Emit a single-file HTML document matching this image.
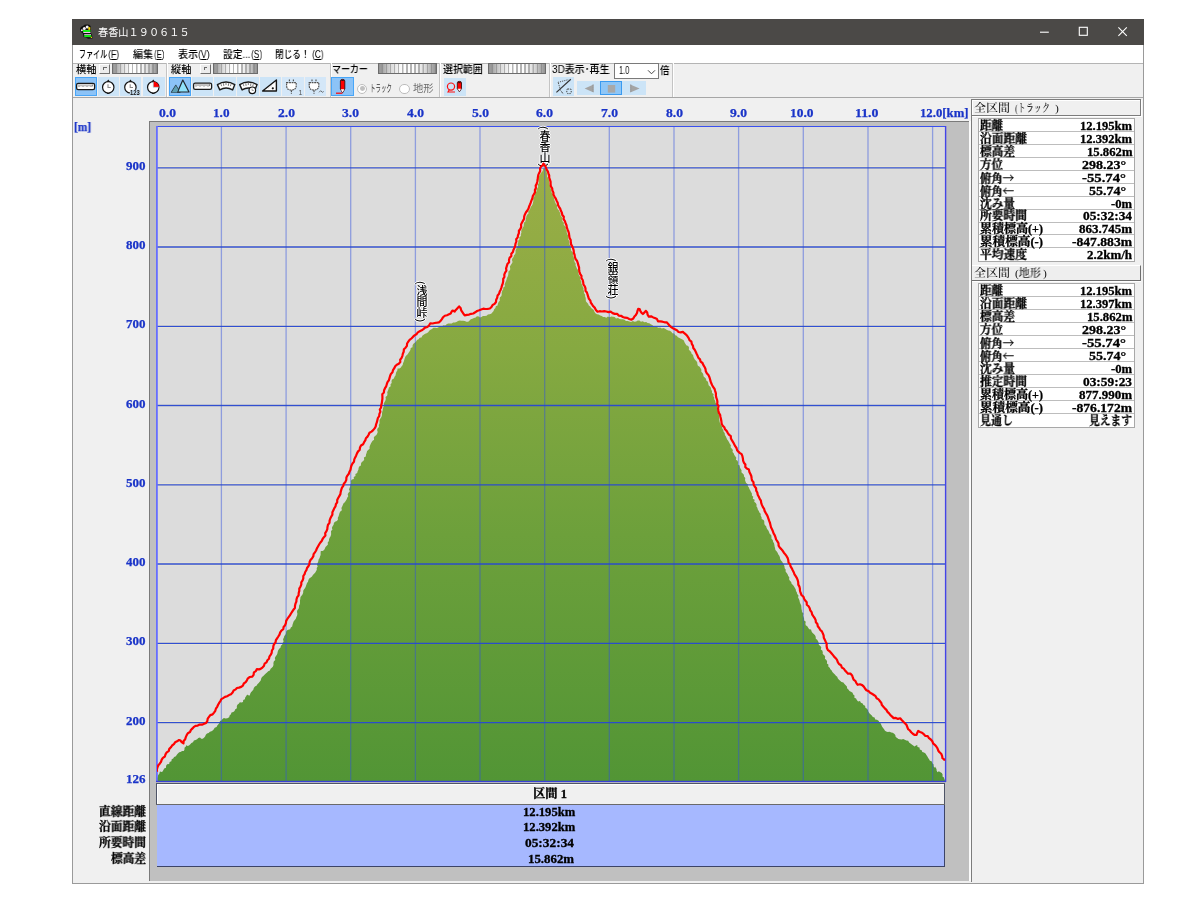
<!DOCTYPE html>
<html lang="ja"><head><meta charset="utf-8"><title>春香山１９０６１５</title>
<style>
html,body{margin:0;padding:0;background:#fff;}
body{width:1200px;height:900px;position:relative;overflow:hidden;font-family:"Liberation Sans","Noto Sans CJK JP",sans-serif;}
.abs{position:absolute;}
span.abs,.vl,#title .t{will-change:transform;}
#win{position:absolute;left:72px;top:19px;width:1071.5px;height:864.5px;background:#f0f0f0;box-shadow:inset 1px -1px 0 #9a9a9a,inset -1px 0 0 #9a9a9a;}
#title{position:absolute;left:0;top:0;width:1071.5px;height:26px;background:#4b4947;}
#title .t{position:absolute;left:26px;top:7px;color:#fff;font-size:10.2px;line-height:14px;letter-spacing:0;white-space:nowrap;}
#menu{position:absolute;left:1px;top:26px;width:1069.5px;height:18px;background:#fff;border-bottom:1px solid #b4b4b4;}
#menu span{position:absolute;top:1px;font-size:10.6px;line-height:15px;color:#000;white-space:nowrap;}
.ser{font-family:"Liberation Serif","Noto Serif CJK SC",serif;font-weight:bold;}
.cj{font-family:"Noto Serif CJK SC",serif;}
.lbl{position:absolute;font-size:10.6px;line-height:13px;color:#000;white-space:nowrap;}
.sld{position:absolute;height:11.4px;top:62.9px;border:1px solid #6c6c6c;background:repeating-linear-gradient(90deg,#fdfdfd 0,#fdfdfd 2.4px,#b4b4b4 2.6px,#b4b4b4 3.9px,#fdfdfd 4.1px);box-sizing:border-box;}
.sld:after{content:"";position:absolute;left:0;top:0;right:0;bottom:0;background:linear-gradient(90deg,rgba(120,120,120,.8),rgba(160,160,160,.35) 22%,rgba(255,255,255,.0) 40%,rgba(255,255,255,0) 62%,rgba(160,160,160,.35) 80%,rgba(120,120,120,.8));}
.sbtn{position:absolute;top:63.6px;width:11.2px;height:10.8px;background:#ececec;border:1px solid #fff;border-right:1.5px solid #707070;border-bottom:1.5px solid #707070;box-sizing:border-box;}
.sbtn:after{content:"";position:absolute;left:3px;top:2.6px;width:2.4px;height:2.2px;border-left:1px solid #6a6a6a;border-top:1px solid #6a6a6a;}
.tb{position:absolute;top:77px;height:19px;background:#cce4f7;box-sizing:border-box;}
.tb.on{background:#8cc3f7;border:1px solid #48a6f8;}
.tb.on2{background:#8fc6f6;border:1.5px solid #3a9af0;}
.tb.dis{background:#d4e7f8;}
.sep{position:absolute;top:63px;width:1px;height:34px;background:#c4c4c4;box-shadow:1px 0 0 #fff;}
.ax{position:absolute;color:#1a34c8;font-size:11.6px;line-height:14px;white-space:nowrap;letter-spacing:0.3px;}
.tbl{position:absolute;left:978px;width:157px;background:#fff;border:1px solid #a8a8a8;box-sizing:border-box;}
.tbl div{position:relative;height:12.95px;box-sizing:border-box;border-bottom:1px solid #bdbdbd;}
.tbl div:last-child{border-bottom:none;}
.tbl b{position:absolute;left:2px;top:0;}
.tbl i{position:absolute;right:2px;top:0;font-style:normal;letter-spacing:0.45px;}
.tbl i.d{right:8px;}
.vl{position:absolute;writing-mode:vertical-rl;font-size:11px;line-height:12px;color:#000;font-weight:500;white-space:nowrap;letter-spacing:0.2px;text-shadow:1px 0 0 #fff,-1px 0 0 #fff,0 1px 0 #fff,0 -1px 0 #fff;font-family:"Liberation Sans","Noto Sans CJK JP",sans-serif;}
.bl{position:absolute;right:1054px;font-size:11.8px;line-height:14px;white-space:nowrap;}
.bv{position:absolute;left:157px;width:788px;text-align:center;font-size:11.8px;line-height:14px;letter-spacing:0.45px;white-space:nowrap;}
</style></head><body>
<div id="win">
 <div id="title"><span class="t">春香山１９０６１５</span></div>
 <div id="menu"></div>
</div>
<span class="abs " style="left:79.4px;top:47.8px;white-space:nowrap;transform-origin:0 0;transform:scaleX(0.676);font-size:10.4px;line-height:14px;color:#000;font-weight:500;">ファイル</span>
<span class="abs " style="left:108.1px;top:47.8px;white-space:nowrap;transform-origin:0 0;transform:scaleX(0.850);font-size:10.4px;line-height:14px;color:#000;font-weight:500;">(<u>F</u>)</span>
<span class="abs " style="left:133.1px;top:47.8px;white-space:nowrap;transform-origin:0 0;transform:scaleX(0.962);font-size:10.4px;line-height:14px;color:#000;font-weight:500;">編集</span>
<span class="abs " style="left:153.5px;top:47.8px;white-space:nowrap;transform-origin:0 0;transform:scaleX(0.742);font-size:10.4px;line-height:14px;color:#000;font-weight:500;">(<u>E</u>)</span>
<span class="abs " style="left:177.5px;top:47.8px;white-space:nowrap;transform-origin:0 0;transform:scaleX(0.962);font-size:10.4px;line-height:14px;color:#000;font-weight:500;">表示</span>
<span class="abs " style="left:197.9px;top:47.8px;white-space:nowrap;transform-origin:0 0;transform:scaleX(0.829);font-size:10.4px;line-height:14px;color:#000;font-weight:500;">(<u>V</u>)</span>
<span class="abs " style="left:223.1px;top:47.8px;white-space:nowrap;transform-origin:0 0;transform:scaleX(0.934);font-size:10.4px;line-height:14px;color:#000;font-weight:500;">設定...</span>
<span class="abs " style="left:250.7px;top:47.8px;white-space:nowrap;transform-origin:0 0;transform:scaleX(0.807);font-size:10.4px;line-height:14px;color:#000;font-weight:500;">(<u>S</u>)</span>
<span class="abs " style="left:275.0px;top:47.8px;white-space:nowrap;transform-origin:0 0;transform:scaleX(0.830);font-size:10.4px;line-height:14px;color:#000;font-weight:500;">閉じる！</span>
<span class="abs " style="left:311.5px;top:47.8px;white-space:nowrap;transform-origin:0 0;transform:scaleX(0.803);font-size:10.4px;line-height:14px;color:#000;font-weight:500;">(<u>C</u>)</span>
<div class="abs" style="left:73px;top:97px;width:1069.5px;height:1.2px;background:#a6a6a6"></div>
<span class="abs " style="left:76.3px;top:62.8px;white-space:nowrap;transform-origin:0 0;transform:scaleX(0.982);font-size:10.2px;line-height:13px;color:#000;font-weight:500;">横軸</span>
<div class="sbtn" style="left:99.3px"></div><div class="sld" style="left:112px;width:46.3px"></div>
<div class="tb on" style="left:75px;width:22px"></div>
<div class="tb" style="left:97.8px;width:21px"></div>
<div class="tb" style="left:119.7px;width:21.2px"></div>
<div class="tb" style="left:142.6px;width:22.3px"></div>
<div class="sep" style="left:166px"></div>
<span class="abs " style="left:170.5px;top:62.8px;white-space:nowrap;transform-origin:0 0;transform:scaleX(0.996);font-size:10.2px;line-height:13px;color:#000;font-weight:500;">縦軸</span>
<div class="sbtn" style="left:199.7px"></div><div class="sld" style="left:212.5px;width:45.8px"></div>
<div class="tb on" style="left:169.3px;width:21.6px"></div>
<div class="tb" style="left:191.9px;width:21.6px"></div>
<div class="tb" style="left:214.4px;width:21.6px"></div>
<div class="tb" style="left:237.0px;width:21.6px"></div>
<div class="tb" style="left:259.5px;width:21.6px"></div>
<div class="tb dis" style="left:282.1px;width:21.6px"></div>
<div class="tb dis" style="left:304.6px;width:21.6px"></div>
<div class="sep" style="left:329.5px"></div>
<span class="abs " style="left:332.0px;top:62.8px;white-space:nowrap;transform-origin:0 0;transform:scaleX(0.883);font-size:10.2px;line-height:13px;color:#000;font-weight:500;">マーカー</span>
<div class="sld" style="left:378.2px;width:58.6px"></div>
<div class="tb on" style="left:331.3px;width:22.4px"></div>
<div class="abs" style="left:357.2px;top:83.7px;width:10.2px;height:10.2px;border-radius:50%;border:1px solid #bcbcbc;background:#fff;box-sizing:border-box"></div><div class="abs" style="left:359.9px;top:86.4px;width:4.8px;height:4.8px;border-radius:50%;background:#c0c0c0"></div>
<span class="abs " style="left:369.8px;top:82.4px;white-space:nowrap;transform-origin:0 0;transform:scaleX(0.537);font-size:10.2px;line-height:13px;color:#6c6c6c;font-weight:500;color:#5c5c5c;">トラック</span>
<div class="abs" style="left:399.4px;top:83.7px;width:10.2px;height:10.2px;border-radius:50%;border:1px solid #bcbcbc;background:#fff;box-sizing:border-box"></div>
<span class="abs " style="left:412.9px;top:82.4px;white-space:nowrap;transform-origin:0 0;transform:scaleX(1.011);font-size:10.2px;line-height:13px;color:#6c6c6c;">地形</span>
<div class="sep" style="left:439px"></div>
<span class="abs " style="left:443.0px;top:62.8px;white-space:nowrap;transform-origin:0 0;transform:scaleX(0.977);font-size:10.2px;line-height:13px;color:#000;font-weight:500;">選択範囲</span>
<div class="sld" style="left:488.2px;width:58.2px"></div>
<div class="tb" style="left:444px;width:21.5px;top:77.5px;height:18px"></div>
<div class="sep" style="left:549px"></div>
<span class="abs " style="left:552.0px;top:62.8px;white-space:nowrap;transform-origin:0 0;transform:scaleX(0.975);font-size:10.2px;line-height:13px;color:#000;font-weight:500;">3D表示･再生</span>
<div class="abs" style="left:614px;top:63px;width:45px;height:16.2px;background:#fff;border:1px solid #7a7a7a;box-sizing:border-box"></div>
<span class="abs " style="left:618.6px;top:64.2px;white-space:nowrap;transform-origin:0 0;transform:scaleX(0.741);font-size:10px;line-height:13px;color:#000;">1.0</span>
<svg class="abs" style="left:647.4px;top:69px" width="10" height="7" viewBox="0 0 10 7"><path d="M1 1.3 L4.5 4.8 L8 1.3" fill="none" stroke="#444" stroke-width="1"/></svg>
<span class="abs " style="left:660.2px;top:63.8px;white-space:nowrap;transform-origin:0 0;transform:scaleX(0.923);font-size:10.2px;line-height:13px;color:#000;font-weight:500;">倍</span>
<div class="tb" style="left:552.5px;width:21.5px;top:77.3px;height:18.5px"></div>
<div class="tb" style="left:577.4px;width:22.4px;top:80.8px;height:14.4px"></div>
<div class="tb on2" style="left:600px;width:21.8px;top:80.8px;height:14.4px"></div>
<div class="tb" style="left:622.4px;width:23.3px;top:80.8px;height:14.4px"></div>
<div class="sep" style="left:672px"></div>
<svg class="abs" style="left:0;top:0" width="1200" height="100" viewBox="0 0 1200 100">
<!-- app icon -->
<g>
<path d="M80 29.5 Q80 26.5 83 26 Q84.5 24.3 87.5 24.6 Q91 25 91 28 L91 33 L92 35 L92.5 38.5 L88 38.8 L86 37.6 L83.5 37 L83 33.5 L81.5 32.5 Q80 31.5 80 29.5Z" fill="#111"/>
<circle cx="84.3" cy="28.4" r="1.5" fill="#f4f0f4"/><circle cx="87.2" cy="27" r="1.5" fill="#f4f0f4"/><circle cx="81.9" cy="30.3" r="1" fill="#e8e0e8"/>
<rect x="88.3" y="27.2" width="2" height="2.6" fill="#ffe600"/>
<rect x="83" y="30" width="7.5" height="2" fill="#16f016"/><rect x="83.3" y="32" width="7.2" height="1" fill="#f0c8f0"/>
<rect x="84.2" y="34.2" width="6.8" height="0.9" fill="#f0c8f0"/><rect x="84.2" y="35" width="7" height="2.1" fill="#16e016"/>
<rect x="90.8" y="36.8" width="1.2" height="1.2" fill="#e8d000"/>
</g>
<!-- window controls -->
<path d="M1040 32.2 H1048.8" stroke="#fff" stroke-width="1.1"/>
<rect x="1079.3" y="27.3" width="8" height="8" fill="none" stroke="#fff" stroke-width="1.1"/>
<path d="M1118.4 27.4 L1126.8 35.8 M1126.8 27.4 L1118.4 35.8" stroke="#fff" stroke-width="1.1"/>

<!-- rulers -->
<g id="ruler1"><rect x="76.6" y="83.4" width="18" height="6.2" rx="1.6" fill="#fff" stroke="#1a1a1a" stroke-width="1.3"/>
<path d="M79 84.4v2.6M81 84.4v2M83 84.4v2.6M85 84.4v2M87 84.4v2.6M89 84.4v2M91 84.4v2.6M92.6 84.4v2" stroke="#7c7c7c" stroke-width="1"/></g>
<g transform="translate(117,-0.3)"><rect x="76.6" y="83.4" width="18" height="6.2" rx="1.6" fill="#fff" stroke="#1a1a1a" stroke-width="1.3"/>
<path d="M79 84.4v2.6M81 84.4v2M83 84.4v2.6M85 84.4v2M87 84.4v2.6M89 84.4v2M91 84.4v2.6M92.6 84.4v2" stroke="#7c7c7c" stroke-width="1"/></g>

<!-- clocks -->
<g id="clk1"><path d="M106.4 82 L108.25 79.6 L110.1 82Z" fill="#111"/><rect x="106.9" y="92.6" width="2.7" height="1.3" fill="#111"/>
<circle cx="108.25" cy="87.3" r="5.7" fill="#fff" stroke="#111" stroke-width="1.2"/><path d="M108 84.2 V87.5 H110.8" fill="none" stroke="#8a8a8a" stroke-width="1.1"/></g>
<g><path d="M128.6 82 L130.45 79.6 L132.3 82Z" fill="#111"/>
<circle cx="130.4" cy="87.3" r="5.7" fill="#fff" stroke="#111" stroke-width="1.2"/><path d="M130.2 84.2 V87.5 H133" fill="none" stroke="#8a8a8a" stroke-width="1.1"/>
<rect x="130.2" y="89.8" width="10" height="5.6" fill="#cce4f7"/>
<text x="130" y="94.9" font-family="Liberation Sans,sans-serif" font-weight="bold" font-size="6.9" fill="#111" textLength="9.8" lengthAdjust="spacingAndGlyphs">123</text></g>
<g><path d="M151.4 82 L153.25 79.6 L155.1 82Z" fill="#111"/><rect x="151.9" y="92.6" width="2.7" height="1.3" fill="#111"/>
<circle cx="153.25" cy="87.3" r="5.7" fill="#fff" stroke="#111" stroke-width="1.2"/>
<path d="M153.25 87.3 V81.6 A5.7 5.7 0 0 1 158.95 87.3Z" fill="#ff0000"/><path d="M153.25 82 V87.3 H158.6" fill="none" stroke="#8fe8f0" stroke-width="0.6"/></g>

<!-- mountains -->
<path d="M171.4 92.2 L175.8 85.3 L178.3 89.5 L180 92.2Z" fill="#5d9fb2" stroke="#2a3a44" stroke-width="1.1" stroke-linejoin="round"/>
<path d="M177.6 92 L182.8 80 L189 92Z" fill="#8fe2fa" stroke="#20262c" stroke-width="1.2" stroke-linejoin="round"/>
<path d="M171.8 92.2 L175.8 85.6 L178.2 89.4 L177 92.2Z" fill="#5d9fb2"/>

<!-- curved ruler 1 -->
<g id="cr"><path d="M217.4 84.6 Q226 79.4 234.8 84.6 L232.6 89.9 Q226 86.2 219.8 89.9 Z" fill="#fff" stroke="#1a1a1a" stroke-width="1.4" stroke-linejoin="round"/>
<path d="M221 84.2l.6 2M223.5 83.3l.3 2.6M226 83v2M228.6 83.3l-.3 2.6M231 84.2l-.6 2" stroke="#7c7c7c" stroke-width="1"/></g>
<g transform="translate(22.3,0)"><path d="M217.4 84.6 Q226 79.4 234.8 84.6 L232.6 89.9 Q226 86.2 219.8 89.9 Z" fill="#fff" stroke="#1a1a1a" stroke-width="1.4" stroke-linejoin="round"/>
<path d="M221 84.2l.6 2M223.5 83.3l.3 2.6M226 83v2M228.6 83.3l-.3 2.6M231 84.2l-.6 2" stroke="#7c7c7c" stroke-width="1"/>
<circle cx="230" cy="90.3" r="3.3" fill="#fff" stroke="#111" stroke-width="1.2"/><path d="M229.8 88.6v1.9h1.7" fill="none" stroke="#888" stroke-width="0.8"/></g>

<!-- triangle -->
<path d="M262.6 91 L276.4 80 L276.4 91Z" fill="#fff" stroke="#151515" stroke-width="1.4" stroke-linejoin="round"/>
<circle cx="272.8" cy="88.3" r="1.1" fill="#111"/><path d="M268 88.5l4-3" stroke="#aaa" stroke-width="0.6" stroke-dasharray="1 1"/>

<!-- plugs -->
<g id="plug" fill="none" stroke="#505050" stroke-width="1.15" stroke-dasharray="1.8 0.7"><path d="M289.4 79.4v3.2M293.4 79.4v3.2"/><path d="M286.6 82.6h9.6v3.2q0 4-4.8 4.4q-4.8-.4-4.8-4.4z" fill="#fff"/><path d="M291.4 90.2v3.6"/></g>
<text x="298.6" y="94.6" font-family="Liberation Sans,sans-serif" font-size="7" fill="#555">1</text>
<g transform="translate(22.6,0)" fill="none" stroke="#505050" stroke-width="1.15" stroke-dasharray="1.8 0.7"><path d="M289.4 79.4v3.2M293.4 79.4v3.2"/><path d="M286.6 82.6h9.6v3.2q0 4-4.8 4.4q-4.8-.4-4.8-4.4z" fill="#fff"/><path d="M291.4 90.2v3.6"/><path d="M296.5 92.3l1.6-1.6 1.6 1.6 1.4-.8" stroke-dasharray="none" stroke-width="0.8"/></g>

<!-- marker pencil -->
<g id="pen"><path d="M340.4 81 Q340.4 79.4 342.6 79.4 Q344.8 79.4 344.8 81 V89 L342.6 92.8 L340.4 89Z" fill="#ff0000" stroke="#3a1010" stroke-width="0.9"/>
<path d="M340.8 89.2 L342.6 92.6 L344.4 89.2Z" fill="#fff"/><path d="M341.4 79.8h2.4v1.2h-2.4z" fill="#401010"/>
<path d="M336 93.2H342.4" stroke="#ff0000" stroke-width="1.2"/></g>

<!-- select icon -->
<circle cx="451" cy="86.6" r="3.6" fill="none" stroke="#ff1010" stroke-width="1.2"/><path d="M449.4 89.6 L448 92 H455" fill="none" stroke="#ff1010" stroke-width="1.1"/>
<path d="M457.3 82.8 Q457.3 81.4 459.4 81.4 Q461.5 81.4 461.5 82.8 V88.6 L459.4 91.8 L457.3 88.6Z" fill="#ff0000" stroke="#3a1010" stroke-width="0.9"/>
<path d="M457.8 88.8 L459.4 91.6 L461 88.8Z" fill="#fff"/><path d="M458.2 81.8h2.4v1.4h-2.4z" fill="#401010"/>

<!-- 3D icon -->
<path d="M556.4 92.4 L570.8 79.2" stroke="#333" stroke-width="1.2"/>
<path d="M557.8 82.4 L568.6 79.6 M558.4 83 L560.6 90.6" stroke="#555" stroke-width="1" stroke-dasharray="1.2 1"/>
<path d="M561 91.4l2.2 2" stroke="#444" stroke-width="0.9"/>
<rect x="566.8" y="89" width="4.4" height="4.6" rx="1" fill="none" stroke="#444" stroke-width="1" stroke-dasharray="1.4 1"/>

<!-- play controls -->
<path d="M593.6 84.6 V92.6 L584.6 88.6Z" fill="#a4a4a4"/><path d="M593 84.6v8" stroke="#8c8c8c" stroke-width="1" stroke-dasharray="1 1"/>
<rect x="607.8" y="85" width="7.4" height="7.6" fill="#a8a8a8"/>
<path d="M630.2 84.6 V92.6 L639.6 88.6Z" fill="#a4a4a4"/><path d="M630.8 84.6v8" stroke="#8c8c8c" stroke-width="1" stroke-dasharray="1 1"/>
</svg>

<div class="abs" style="left:149px;top:121px;width:820.2px;height:760px;background:#c0c0c0;border-left:1.2px solid #7a7a7a;border-top:1.2px solid #7a7a7a;box-sizing:border-box"></div>
<div class="abs" style="left:969.2px;top:121px;width:2.2px;height:760px;background:#fbfbfb"></div>
<div class="abs" style="left:971.4px;top:98.5px;width:1px;height:783px;background:#7c7c7c"></div>
<div class="abs" style="left:156px;top:783.2px;width:789px;height:21.4px;background:#f0f0f0;border:1px solid #4e5466;border-bottom:1.3px solid #6a6a6a;box-shadow:inset 1px 1px 0 #fff;box-sizing:border-box"></div>
<div class="abs" style="left:157px;top:804.6px;width:788px;height:62.7px;background:#a6b8ff;border-right:1px solid #3c4468;border-bottom:1px solid #3c4468;box-sizing:border-box"></div>
<svg width="1200" height="900" viewBox="0 0 1200 900" style="position:absolute;left:0;top:0">
<defs><linearGradient id="gg" x1="0" y1="165" x2="0" y2="781" gradientUnits="userSpaceOnUse"><stop offset="0" stop-color="#9bae46"/><stop offset="0.3" stop-color="#86a941"/><stop offset="0.6" stop-color="#6da03b"/><stop offset="1" stop-color="#529535"/></linearGradient>
<clipPath id="cp"><rect x="157" y="127" width="788.5" height="654"/></clipPath></defs>
<rect x="156.5" y="126.5" width="789" height="655" fill="#dcdcdc" stroke="#3a50ee" stroke-width="1"/>
<g clip-path="url(#cp)">
<line x1="157" y1="167.8" x2="945" y2="167.8" stroke="#fff4c0" stroke-width="3" opacity="0.4"/>
<line x1="157" y1="247.0" x2="945" y2="247.0" stroke="#fff4c0" stroke-width="3" opacity="0.4"/>
<line x1="157" y1="326.3" x2="945" y2="326.3" stroke="#fff4c0" stroke-width="3" opacity="0.4"/>
<line x1="157" y1="405.5" x2="945" y2="405.5" stroke="#fff4c0" stroke-width="3" opacity="0.4"/>
<line x1="157" y1="484.8" x2="945" y2="484.8" stroke="#fff4c0" stroke-width="3" opacity="0.4"/>
<line x1="157" y1="564.0" x2="945" y2="564.0" stroke="#fff4c0" stroke-width="3" opacity="0.4"/>
<line x1="157" y1="643.3" x2="945" y2="643.3" stroke="#fff4c0" stroke-width="3" opacity="0.4"/>
<line x1="157" y1="722.6" x2="945" y2="722.6" stroke="#fff4c0" stroke-width="3" opacity="0.4"/>
<path d="M157.0 778.3 L157.7 776.8 L158.2 775.1 L159.3 773.7 L159.7 772.0 L160.1 771.4 L161.7 772.0 L162.6 771.6 L163.4 770.1 L164.2 768.6 L166.0 767.7 L166.1 765.8 L167.1 764.3 L169.2 763.9 L169.6 761.9 L171.4 761.3 L171.7 759.3 L173.2 758.4 L174.1 756.9 L175.9 756.2 L176.8 754.7 L177.9 753.4 L179.2 752.3 L180.5 752.0 L182.1 751.0 L183.8 751.0 L184.5 749.6 L184.5 747.8 L185.9 746.4 L186.1 745.2 L187.7 745.9 L189.0 745.4 L190.3 744.2 L191.4 742.9 L193.0 742.3 L193.9 740.6 L195.6 740.0 L197.1 739.3 L198.3 737.9 L200.0 737.6 L201.2 738.7 L202.7 738.8 L204.0 737.8 L205.1 736.4 L205.8 734.8 L207.0 733.6 L208.6 733.1 L209.9 731.7 L211.5 731.3 L213.0 730.3 L213.8 729.3 L214.7 727.8 L216.6 727.0 L217.3 725.5 L218.4 724.2 L219.5 722.8 L220.0 721.1 L221.5 720.4 L222.5 719.0 L223.9 718.1 L225.7 718.5 L227.4 718.2 L229.2 717.3 L229.6 715.5 L230.9 714.3 L231.5 712.6 L233.3 712.1 L234.5 711.0 L235.3 709.2 L236.9 708.3 L236.8 706.3 L237.4 704.8 L239.0 703.6 L239.8 702.2 L241.5 702.5 L243.0 702.0 L243.2 700.1 L244.9 699.2 L245.2 697.4 L246.3 696.0 L247.1 694.5 L248.1 695.3 L249.8 695.5 L250.2 693.8 L251.0 692.2 L252.2 691.0 L253.3 689.7 L253.8 688.0 L254.9 686.6 L256.5 685.7 L257.4 684.3 L258.7 683.1 L259.7 681.8 L260.7 680.4 L261.2 678.6 L262.0 677.1 L263.3 675.9 L264.5 674.7 L265.8 673.6 L267.0 672.5 L268.2 671.2 L269.9 670.6 L270.6 668.8 L271.8 667.8 L273.0 666.4 L273.5 664.8 L273.4 662.9 L273.9 661.3 L275.3 660.0 L274.8 658.0 L275.6 656.5 L276.7 655.1 L277.4 653.5 L277.7 651.8 L278.2 650.2 L279.2 648.7 L280.6 647.5 L280.9 645.8 L282.3 644.5 L282.7 642.8 L283.6 641.4 L283.0 639.3 L283.8 637.8 L284.3 636.1 L285.4 634.8 L286.0 633.2 L286.2 631.4 L287.5 630.1 L289.1 629.4 L290.1 629.2 L290.8 627.6 L292.2 626.4 L292.5 624.7 L293.1 623.0 L293.6 621.4 L294.8 620.1 L295.8 618.7 L296.4 617.1 L297.1 615.5 L297.4 613.8 L297.0 612.0 L297.3 610.3 L298.6 608.8 L299.0 607.2 L299.1 605.5 L299.9 603.9 L300.0 602.2 L300.0 600.4 L300.3 598.8 L300.5 597.1 L301.7 595.6 L302.6 594.2 L303.2 592.6 L303.2 590.8 L304.1 589.3 L305.1 587.9 L305.8 586.4 L306.4 584.8 L307.0 583.1 L308.0 581.7 L308.4 580.0 L309.2 578.6 L310.7 577.4 L312.0 576.6 L312.9 575.0 L314.1 573.8 L315.3 572.6 L316.0 571.2 L316.8 569.7 L316.7 567.9 L317.7 566.4 L316.9 564.5 L317.6 562.9 L318.3 561.3 L318.6 559.6 L319.6 558.1 L320.0 556.5 L320.6 554.9 L320.6 553.1 L320.8 551.0 L322.6 550.9 L324.1 550.1 L324.9 548.6 L325.5 547.0 L326.8 545.8 L327.9 544.4 L327.7 542.4 L328.9 541.1 L329.0 539.3 L329.6 537.7 L330.6 536.2 L331.1 534.6 L331.1 532.9 L331.0 531.1 L332.4 529.7 L331.9 527.8 L332.6 526.2 L333.6 524.7 L333.9 523.1 L335.0 521.7 L336.8 521.0 L337.9 519.7 L337.8 517.7 L338.6 516.2 L339.1 514.5 L339.5 512.9 L340.3 511.4 L341.9 510.2 L341.4 508.1 L342.2 506.6 L342.8 505.0 L343.4 503.4 L344.8 502.2 L345.8 500.8 L346.7 499.3 L347.2 497.7 L348.2 496.3 L347.7 494.3 L348.5 492.8 L349.8 491.3 L349.0 489.4 L349.6 487.8 L350.3 486.2 L350.4 484.5 L351.1 482.9 L350.8 481.1 L351.9 479.5 L353.9 479.0 L353.7 477.0 L355.5 476.0 L355.4 474.0 L357.2 473.0 L357.6 471.3 L358.4 469.8 L358.6 468.0 L359.2 466.4 L360.9 465.4 L361.0 463.5 L361.8 462.0 L363.3 460.9 L364.2 459.4 L363.9 457.4 L365.8 456.4 L366.0 454.6 L366.6 453.0 L367.0 451.3 L368.1 450.0 L369.6 448.8 L369.5 446.9 L370.1 445.3 L370.8 443.7 L371.6 442.2 L372.6 440.8 L374.1 439.7 L373.8 437.6 L374.7 436.2 L376.4 435.1 L377.2 433.5 L377.7 431.9 L377.1 429.9 L377.7 428.3 L379.0 426.9 L378.8 425.1 L379.5 423.6 L379.5 421.8 L379.5 420.0 L380.4 418.5 L381.4 417.0 L381.9 415.4 L382.0 413.6 L382.2 412.0 L382.7 410.3 L382.9 408.6 L383.4 407.0 L384.2 405.4 L383.7 403.6 L384.6 402.0 L385.4 400.5 L385.8 398.9 L385.5 397.0 L387.1 395.8 L387.5 394.1 L387.2 392.2 L388.0 390.6 L388.5 389.0 L388.9 387.4 L390.7 386.2 L390.5 384.3 L391.7 383.0 L391.5 381.0 L392.1 379.4 L393.9 378.4 L394.5 376.8 L395.5 375.4 L395.8 373.7 L396.3 372.0 L397.3 370.6 L397.6 368.6 L399.4 368.4 L400.9 367.5 L401.6 366.3 L402.7 364.9 L403.0 363.2 L403.8 361.6 L404.2 360.0 L404.7 358.4 L405.3 356.8 L406.3 355.4 L407.7 354.3 L408.6 352.8 L409.5 351.4 L410.4 349.9 L410.7 348.1 L412.5 347.3 L412.6 345.3 L413.4 343.8 L414.8 342.7 L416.1 341.6 L417.0 340.1 L418.6 339.3 L419.6 337.8 L421.5 337.5 L422.3 335.8 L423.7 334.8 L425.1 333.8 L426.7 333.2 L428.2 332.3 L429.2 330.8 L430.5 329.7 L432.0 329.1 L433.4 327.8 L435.2 327.8 L437.0 327.9 L438.6 327.3 L439.9 325.9 L441.9 326.4 L443.3 325.3 L445.2 325.6 L446.6 324.3 L448.1 323.6 L449.9 323.6 L451.7 323.5 L453.1 322.4 L454.9 322.6 L456.5 322.0 L458.0 321.1 L459.7 320.6 L461.4 320.7 L463.1 320.8 L464.8 321.1 L466.4 321.8 L468.2 321.8 L469.6 320.6 L470.8 319.3 L472.4 318.7 L474.0 318.1 L475.7 317.6 L476.9 316.3 L478.9 316.4 L480.0 317.5 L481.5 316.9 L482.9 315.9 L484.8 315.9 L486.6 315.8 L487.9 314.6 L489.6 314.3 L491.2 313.7 L492.5 312.2 L493.6 311.0 L494.1 309.2 L495.4 308.0 L495.8 306.2 L497.6 305.5 L497.9 303.7 L498.6 302.1 L499.8 300.7 L499.6 298.8 L500.0 297.2 L501.4 295.9 L501.7 294.2 L501.7 292.4 L502.2 290.7 L503.2 289.3 L503.3 287.5 L505.0 286.3 L504.6 284.4 L505.2 282.8 L505.9 281.3 L506.5 279.7 L506.9 278.0 L507.7 276.5 L508.2 274.9 L508.4 273.1 L508.4 271.4 L510.1 270.1 L510.2 268.4 L509.9 266.5 L510.8 265.0 L511.8 263.5 L512.6 262.0 L511.9 260.0 L512.4 258.3 L513.6 256.9 L514.0 255.3 L515.2 253.9 L515.6 252.3 L515.5 250.4 L516.2 248.9 L516.9 247.3 L517.9 245.8 L517.5 243.9 L518.2 242.4 L518.3 240.6 L519.5 239.2 L519.2 237.3 L520.9 236.1 L520.8 234.3 L521.4 232.7 L521.2 230.9 L521.9 229.3 L522.7 227.7 L523.7 226.3 L523.8 224.5 L523.9 222.8 L525.4 221.5 L525.6 219.8 L526.1 218.1 L526.3 216.4 L527.1 214.8 L528.5 213.6 L528.2 211.6 L529.4 210.3 L530.2 208.8 L530.6 207.1 L531.8 205.8 L532.6 204.2 L533.0 202.6 L533.4 200.9 L533.2 199.1 L533.6 197.4 L534.6 195.9 L534.9 194.3 L535.3 192.6 L536.7 191.2 L536.3 189.3 L537.6 188.0 L538.2 186.4 L537.6 184.5 L539.0 183.0 L538.6 181.2 L538.7 179.5 L539.0 177.8 L539.1 176.1 L540.2 174.6 L540.8 173.0 L542.2 171.8 L542.9 170.2 L543.1 168.4 L544.8 168.4 L545.8 169.8 L546.6 171.4 L546.9 173.1 L547.3 174.8 L547.1 176.5 L548.1 178.1 L548.8 179.6 L549.1 181.3 L549.2 183.0 L549.5 184.7 L550.4 186.2 L550.3 188.0 L551.5 189.5 L551.3 191.3 L551.9 192.9 L553.0 194.3 L552.8 196.2 L553.8 197.6 L554.2 199.3 L554.7 200.9 L555.2 202.5 L556.0 204.0 L557.2 205.4 L557.0 207.3 L557.6 208.9 L558.8 210.2 L559.4 211.8 L560.5 213.2 L560.4 215.1 L561.3 216.5 L562.5 217.9 L562.2 219.8 L562.6 221.5 L564.0 222.8 L563.7 224.7 L564.9 226.1 L565.9 227.5 L565.8 229.4 L566.8 230.8 L566.7 232.6 L567.3 234.2 L568.4 235.7 L568.2 237.5 L568.2 239.2 L569.1 240.8 L569.4 242.4 L569.4 244.2 L570.4 245.7 L570.7 247.4 L571.0 249.1 L571.2 250.8 L572.6 252.1 L573.2 253.7 L572.8 255.6 L573.6 257.2 L574.5 258.7 L574.2 260.5 L574.7 262.2 L575.7 263.6 L575.6 265.4 L576.3 267.0 L576.9 268.6 L578.0 270.0 L578.9 271.6 L578.4 273.5 L578.9 275.1 L579.9 276.6 L580.2 278.3 L580.5 279.9 L581.4 281.4 L581.3 283.2 L582.0 284.8 L582.7 286.4 L583.6 287.9 L583.4 289.7 L584.1 291.3 L583.9 293.1 L585.0 294.6 L585.1 296.3 L585.7 297.9 L585.8 299.6 L585.9 301.3 L586.9 302.5 L588.1 303.7 L588.8 305.4 L590.3 306.4 L591.1 307.9 L592.5 308.9 L593.7 310.1 L594.4 311.8 L595.4 313.3 L596.9 314.2 L598.6 314.6 L600.2 315.4 L601.8 315.9 L603.1 317.1 L604.6 317.1 L606.4 317.7 L607.9 316.4 L609.7 317.3 L611.3 316.4 L613.0 316.7 L614.7 317.0 L616.0 318.4 L618.0 317.9 L619.5 318.9 L621.1 319.3 L622.8 319.3 L624.5 319.7 L626.0 321.0 L627.7 321.1 L629.4 321.4 L631.0 321.9 L632.9 321.1 L634.5 321.7 L636.2 321.5 L637.7 320.5 L639.5 320.6 L640.9 321.7 L642.8 321.3 L644.3 322.3 L646.2 321.9 L647.6 323.0 L649.4 323.2 L650.7 324.3 L652.3 324.9 L653.5 326.3 L655.1 326.9 L656.9 327.1 L658.5 327.7 L660.2 327.6 L661.8 328.4 L663.6 327.9 L665.1 328.8 L666.6 329.7 L668.2 330.4 L669.9 330.8 L671.3 331.8 L672.4 333.2 L674.2 333.6 L675.2 335.2 L676.8 335.8 L677.9 337.2 L679.5 338.0 L681.0 338.7 L682.5 339.6 L683.9 340.6 L684.5 342.3 L685.4 343.8 L686.3 345.2 L688.2 346.0 L689.0 347.4 L688.8 349.5 L689.9 350.8 L691.1 352.1 L691.6 353.8 L693.1 354.9 L693.4 356.7 L694.1 358.2 L695.0 359.7 L696.3 360.9 L697.2 362.3 L697.4 364.2 L697.9 365.8 L699.7 366.8 L700.6 368.2 L701.4 369.8 L701.3 371.7 L702.6 372.9 L703.3 374.5 L703.5 376.3 L704.8 377.6 L706.0 378.8 L706.3 380.6 L707.9 381.7 L708.3 383.4 L708.6 385.2 L710.0 386.4 L710.9 387.8 L711.1 389.6 L712.0 391.0 L712.0 393.0 L713.7 394.1 L713.3 396.0 L714.3 397.5 L714.2 399.3 L715.2 400.7 L715.4 402.5 L716.3 404.0 L716.9 405.6 L717.1 407.3 L717.0 409.0 L717.9 410.6 L718.4 412.2 L718.5 413.9 L719.2 415.5 L719.2 417.3 L719.2 419.0 L719.5 420.7 L719.7 422.3 L720.5 423.9 L721.2 425.3 L722.0 426.8 L722.3 428.6 L723.3 430.0 L723.6 431.7 L724.7 433.1 L724.9 434.9 L725.8 436.3 L726.5 437.9 L727.2 439.4 L728.2 440.8 L729.0 442.3 L729.8 443.8 L730.9 445.2 L730.6 447.2 L731.7 448.6 L732.9 449.9 L732.5 451.9 L733.7 453.3 L734.3 454.9 L735.2 456.3 L736.3 457.7 L735.9 459.7 L737.6 460.8 L738.1 462.5 L737.9 464.4 L739.7 465.5 L739.9 467.3 L740.6 468.8 L741.6 470.2 L741.4 472.2 L742.7 473.4 L743.9 474.8 L744.0 476.6 L745.3 477.9 L745.0 479.9 L745.5 481.5 L746.1 483.1 L747.9 484.2 L747.8 486.1 L748.9 487.4 L749.4 489.1 L750.3 490.5 L751.0 492.1 L751.9 493.6 L751.9 495.4 L753.3 496.7 L752.8 498.7 L754.7 499.8 L754.2 501.8 L755.8 503.0 L756.6 504.5 L756.5 506.4 L757.4 507.8 L757.8 509.5 L758.8 510.9 L759.4 512.6 L760.7 513.8 L760.7 515.7 L761.6 517.2 L761.7 519.0 L763.6 519.9 L764.3 521.5 L764.3 523.4 L764.8 525.1 L766.2 526.3 L766.6 528.0 L767.5 529.4 L768.5 530.8 L769.2 532.4 L769.8 534.0 L771.2 535.1 L771.5 536.9 L771.5 538.7 L772.8 540.1 L773.1 541.8 L774.0 543.3 L774.4 544.9 L774.6 546.6 L775.1 548.3 L775.4 550.0 L776.6 551.3 L777.6 552.7 L778.2 554.3 L779.3 555.7 L779.9 557.3 L780.2 559.0 L781.0 560.6 L782.2 561.8 L783.0 563.3 L783.9 564.8 L784.5 566.4 L784.7 568.2 L785.7 569.6 L785.6 571.5 L786.7 572.9 L787.6 574.3 L788.2 575.9 L789.3 577.3 L789.1 579.2 L789.9 580.8 L791.2 582.0 L791.6 583.7 L793.0 584.9 L793.9 586.3 L794.8 587.8 L795.7 589.2 L796.0 591.0 L796.9 592.5 L797.2 594.1 L798.5 595.5 L798.1 597.4 L798.9 598.9 L799.5 600.5 L799.8 602.2 L800.4 603.8 L801.2 605.3 L801.4 607.0 L801.5 608.8 L801.9 610.4 L802.0 612.1 L803.5 613.5 L803.0 615.4 L803.6 617.0 L804.1 618.6 L804.2 620.4 L805.8 621.7 L805.4 623.6 L805.7 625.2 L807.3 626.2 L808.2 627.7 L809.2 629.2 L811.1 629.5 L811.5 631.3 L812.4 632.8 L813.8 634.0 L815.0 635.2 L815.7 636.8 L815.8 638.7 L817.2 639.8 L818.1 641.3 L818.8 642.9 L818.8 644.7 L820.3 645.9 L821.3 647.3 L820.8 649.4 L822.3 650.6 L822.8 652.2 L822.7 654.1 L824.3 655.3 L825.2 656.7 L824.9 658.7 L826.4 659.9 L827.1 661.5 L826.9 663.4 L828.4 664.6 L828.3 666.5 L829.7 667.8 L830.4 669.2 L831.7 670.4 L832.4 671.9 L833.6 673.2 L834.9 674.4 L835.9 675.7 L837.2 676.8 L837.9 678.5 L839.0 679.8 L840.4 680.9 L841.5 682.1 L843.4 682.6 L844.5 684.0 L845.7 685.2 L846.9 686.4 L847.2 688.4 L848.4 689.6 L849.5 690.9 L851.0 691.8 L852.6 692.7 L853.2 694.4 L854.5 695.6 L854.4 697.7 L856.1 698.6 L856.8 699.9 L858.1 701.4 L860.0 701.1 L860.9 702.7 L862.7 703.4 L863.4 705.0 L865.1 705.8 L865.4 707.8 L867.0 708.7 L867.9 710.1 L868.4 711.8 L869.4 713.2 L870.7 714.4 L871.8 715.4 L872.8 717.0 L874.6 717.4 L875.2 719.4 L877.0 719.8 L878.5 720.7 L879.5 722.2 L880.7 723.4 L881.4 725.0 L882.0 726.6 L883.1 728.0 L884.1 729.3 L885.0 730.7 L886.2 731.5 L887.8 732.1 L889.6 731.8 L891.2 732.5 L892.7 732.8 L894.2 733.7 L895.3 735.0 L895.7 736.9 L897.2 737.9 L898.4 739.1 L899.9 739.2 L901.6 739.4 L903.2 739.1 L904.8 739.8 L906.3 740.4 L908.2 740.8 L909.1 742.5 L910.5 743.4 L911.8 744.5 L913.2 745.5 L914.5 746.4 L916.0 745.5 L917.2 745.1 L917.5 747.1 L919.5 747.6 L919.8 749.6 L921.7 750.3 L922.3 752.0 L924.0 752.6 L925.5 753.5 L926.4 755.1 L927.4 756.5 L928.2 757.9 L929.1 759.3 L929.9 760.8 L931.9 761.6 L932.4 763.2 L933.6 764.5 L933.7 766.4 L934.9 767.7 L935.7 766.4 L935.5 765.7 L935.6 767.4 L936.5 768.9 L936.6 770.6 L937.5 772.2 L938.9 771.3 L940.0 772.0 L941.8 773.0 L942.6 774.5 L942.5 776.4 L944.0 777.6 L944.4 779.3 L944.7 779.4 L945 781 L157 781 Z" fill="url(#gg)"/>
<line x1="221.4" y1="127" x2="221.4" y2="781" stroke="#3050e0" stroke-width="1.3" opacity="0.45"/>
<line x1="286.1" y1="127" x2="286.1" y2="781" stroke="#3050e0" stroke-width="1.3" opacity="0.45"/>
<line x1="350.7" y1="127" x2="350.7" y2="781" stroke="#3050e0" stroke-width="1.3" opacity="0.45"/>
<line x1="415.4" y1="127" x2="415.4" y2="781" stroke="#3050e0" stroke-width="1.3" opacity="0.45"/>
<line x1="480.0" y1="127" x2="480.0" y2="781" stroke="#3050e0" stroke-width="1.3" opacity="0.45"/>
<line x1="544.7" y1="127" x2="544.7" y2="781" stroke="#3050e0" stroke-width="1.3" opacity="0.45"/>
<line x1="609.3" y1="127" x2="609.3" y2="781" stroke="#3050e0" stroke-width="1.3" opacity="0.45"/>
<line x1="674.0" y1="127" x2="674.0" y2="781" stroke="#3050e0" stroke-width="1.3" opacity="0.45"/>
<line x1="738.6" y1="127" x2="738.6" y2="781" stroke="#3050e0" stroke-width="1.3" opacity="0.45"/>
<line x1="803.3" y1="127" x2="803.3" y2="781" stroke="#3050e0" stroke-width="1.3" opacity="0.45"/>
<line x1="868.0" y1="127" x2="868.0" y2="781" stroke="#3050e0" stroke-width="1.3" opacity="0.45"/>
<line x1="932.6" y1="127" x2="932.6" y2="781" stroke="#3050e0" stroke-width="1.3" opacity="0.45"/>
<line x1="157" y1="167.8" x2="945" y2="167.8" stroke="#2848d2" stroke-width="1.35" opacity="0.95"/>
<line x1="157" y1="247.0" x2="945" y2="247.0" stroke="#2848d2" stroke-width="1.35" opacity="0.95"/>
<line x1="157" y1="326.3" x2="945" y2="326.3" stroke="#2848d2" stroke-width="1.35" opacity="0.95"/>
<line x1="157" y1="405.5" x2="945" y2="405.5" stroke="#2848d2" stroke-width="1.35" opacity="0.95"/>
<line x1="157" y1="484.8" x2="945" y2="484.8" stroke="#2848d2" stroke-width="1.35" opacity="0.95"/>
<line x1="157" y1="564.0" x2="945" y2="564.0" stroke="#2848d2" stroke-width="1.35" opacity="0.95"/>
<line x1="157" y1="643.3" x2="945" y2="643.3" stroke="#2848d2" stroke-width="1.35" opacity="0.95"/>
<line x1="157" y1="722.6" x2="945" y2="722.6" stroke="#2848d2" stroke-width="1.35" opacity="0.95"/>
</g>
<rect x="156" y="126" width="1.8" height="656" fill="#666eff"/>
<rect x="944.9" y="126" width="1.4" height="656" fill="#4444e8"/>
<rect x="156" y="780.8" width="790" height="1.3" fill="#3a40d8"/>
</svg>
<span class="abs ser" style="left:159.2px;top:105.8px;white-space:nowrap;transform-origin:0 0;transform:scaleX(1.133);font-size:12px;line-height:14px;color:#1a34c8;-webkit-text-stroke:0.25px #1a34c8;">0.0</span>
<span class="abs ser" style="left:212.7px;top:105.8px;white-space:nowrap;transform-origin:0 0;transform:scaleX(1.100);font-size:12px;line-height:14px;color:#1a34c8;-webkit-text-stroke:0.25px #1a34c8;">1.0</span>
<span class="abs ser" style="left:277.6px;top:105.8px;white-space:nowrap;transform-origin:0 0;transform:scaleX(1.133);font-size:12px;line-height:14px;color:#1a34c8;-webkit-text-stroke:0.25px #1a34c8;">2.0</span>
<span class="abs ser" style="left:342.2px;top:105.8px;white-space:nowrap;transform-origin:0 0;transform:scaleX(1.133);font-size:12px;line-height:14px;color:#1a34c8;-webkit-text-stroke:0.25px #1a34c8;">3.0</span>
<span class="abs ser" style="left:406.9px;top:105.8px;white-space:nowrap;transform-origin:0 0;transform:scaleX(1.133);font-size:12px;line-height:14px;color:#1a34c8;-webkit-text-stroke:0.25px #1a34c8;">4.0</span>
<span class="abs ser" style="left:471.5px;top:105.8px;white-space:nowrap;transform-origin:0 0;transform:scaleX(1.133);font-size:12px;line-height:14px;color:#1a34c8;-webkit-text-stroke:0.25px #1a34c8;">5.0</span>
<span class="abs ser" style="left:536.2px;top:105.8px;white-space:nowrap;transform-origin:0 0;transform:scaleX(1.133);font-size:12px;line-height:14px;color:#1a34c8;-webkit-text-stroke:0.25px #1a34c8;">6.0</span>
<span class="abs ser" style="left:600.8px;top:105.8px;white-space:nowrap;transform-origin:0 0;transform:scaleX(1.133);font-size:12px;line-height:14px;color:#1a34c8;-webkit-text-stroke:0.25px #1a34c8;">7.0</span>
<span class="abs ser" style="left:665.5px;top:105.8px;white-space:nowrap;transform-origin:0 0;transform:scaleX(1.133);font-size:12px;line-height:14px;color:#1a34c8;-webkit-text-stroke:0.25px #1a34c8;">8.0</span>
<span class="abs ser" style="left:730.1px;top:105.8px;white-space:nowrap;transform-origin:0 0;transform:scaleX(1.133);font-size:12px;line-height:14px;color:#1a34c8;-webkit-text-stroke:0.25px #1a34c8;">9.0</span>
<span class="abs ser" style="left:790.3px;top:105.8px;white-space:nowrap;transform-origin:0 0;transform:scaleX(1.119);font-size:12px;line-height:14px;color:#1a34c8;-webkit-text-stroke:0.25px #1a34c8;">10.0</span>
<span class="abs ser" style="left:855.0px;top:105.8px;white-space:nowrap;transform-origin:0 0;transform:scaleX(1.155);font-size:12px;line-height:14px;color:#1a34c8;-webkit-text-stroke:0.25px #1a34c8;">11.0</span>
<span class="abs ser" style="left:919.5px;top:105.8px;white-space:nowrap;transform-origin:0 0;transform:scaleX(1.062);font-size:12px;line-height:14px;color:#1a34c8;-webkit-text-stroke:0.25px #1a34c8;">12.0[km]</span>
<span class="abs ser" style="left:74.2px;top:119.6px;white-space:nowrap;transform-origin:0 0;transform:scaleX(0.950);font-size:12px;line-height:14px;color:#1a34c8;-webkit-text-stroke:0.25px #1a34c8;">[m]</span>
<span class="abs ser" style="left:125.8px;top:158.8px;white-space:nowrap;transform-origin:0 0;transform:scaleX(1.083);font-size:12px;line-height:14px;color:#1a34c8;-webkit-text-stroke:0.25px #1a34c8;">900</span>
<span class="abs ser" style="left:125.8px;top:238.1px;white-space:nowrap;transform-origin:0 0;transform:scaleX(1.083);font-size:12px;line-height:14px;color:#1a34c8;-webkit-text-stroke:0.25px #1a34c8;">800</span>
<span class="abs ser" style="left:125.8px;top:317.4px;white-space:nowrap;transform-origin:0 0;transform:scaleX(1.083);font-size:12px;line-height:14px;color:#1a34c8;-webkit-text-stroke:0.25px #1a34c8;">700</span>
<span class="abs ser" style="left:125.8px;top:396.6px;white-space:nowrap;transform-origin:0 0;transform:scaleX(1.083);font-size:12px;line-height:14px;color:#1a34c8;-webkit-text-stroke:0.25px #1a34c8;">600</span>
<span class="abs ser" style="left:125.8px;top:475.9px;white-space:nowrap;transform-origin:0 0;transform:scaleX(1.083);font-size:12px;line-height:14px;color:#1a34c8;-webkit-text-stroke:0.25px #1a34c8;">500</span>
<span class="abs ser" style="left:125.8px;top:555.1px;white-space:nowrap;transform-origin:0 0;transform:scaleX(1.083);font-size:12px;line-height:14px;color:#1a34c8;-webkit-text-stroke:0.25px #1a34c8;">400</span>
<span class="abs ser" style="left:125.8px;top:634.4px;white-space:nowrap;transform-origin:0 0;transform:scaleX(1.083);font-size:12px;line-height:14px;color:#1a34c8;-webkit-text-stroke:0.25px #1a34c8;">300</span>
<span class="abs ser" style="left:125.8px;top:713.7px;white-space:nowrap;transform-origin:0 0;transform:scaleX(1.083);font-size:12px;line-height:14px;color:#1a34c8;-webkit-text-stroke:0.25px #1a34c8;">200</span>
<span class="abs ser" style="left:125.8px;top:771.5px;white-space:nowrap;transform-origin:0 0;transform:scaleX(1.083);font-size:12px;line-height:14px;color:#1a34c8;-webkit-text-stroke:0.25px #1a34c8;">126</span>
<div class="vl" style="left:538.1px;top:126.4px">(春香山)</div>
<div class="vl" style="left:415.2px;top:280.5px">(浅間峠)</div>
<div class="vl" style="left:605.6px;top:258.4px">(銀嶺荘)</div>
<span class="abs ser" style="left:532.6px;top:786.8px;white-space:nowrap;transform-origin:0 0;transform:scaleX(1.030);font-size:12px;line-height:14px;color:#000;-webkit-text-stroke:0.3px #000;">区間 1</span>
<span class="abs ser" style="left:98.8px;top:804.7px;white-space:nowrap;transform-origin:0 0;transform:scaleX(0.979);font-size:12px;line-height:14px;color:#000;-webkit-text-stroke:0.3px #000;">直線距離</span>
<span class="abs ser" style="left:523.4px;top:804.7px;white-space:nowrap;transform-origin:0 0;transform:scaleX(1.053);font-size:12px;line-height:14px;color:#000;-webkit-text-stroke:0.3px #000;">12.195km</span>
<span class="abs ser" style="left:98.8px;top:820.3px;white-space:nowrap;transform-origin:0 0;transform:scaleX(0.979);font-size:12px;line-height:14px;color:#000;-webkit-text-stroke:0.3px #000;">沿面距離</span>
<span class="abs ser" style="left:523.4px;top:820.3px;white-space:nowrap;transform-origin:0 0;transform:scaleX(1.053);font-size:12px;line-height:14px;color:#000;-webkit-text-stroke:0.3px #000;">12.392km</span>
<span class="abs ser" style="left:98.8px;top:835.9px;white-space:nowrap;transform-origin:0 0;transform:scaleX(0.979);font-size:12px;line-height:14px;color:#000;-webkit-text-stroke:0.3px #000;">所要時間</span>
<span class="abs ser" style="left:525.0px;top:835.9px;white-space:nowrap;transform-origin:0 0;transform:scaleX(1.114);font-size:12px;line-height:14px;color:#000;-webkit-text-stroke:0.3px #000;">05:32:34</span>
<span class="abs ser" style="left:110.8px;top:851.5px;white-space:nowrap;transform-origin:0 0;transform:scaleX(0.972);font-size:12px;line-height:14px;color:#000;-webkit-text-stroke:0.3px #000;">標高差</span>
<span class="abs ser" style="left:528.0px;top:851.5px;white-space:nowrap;transform-origin:0 0;transform:scaleX(1.070);font-size:12px;line-height:14px;color:#000;-webkit-text-stroke:0.3px #000;">15.862m</span>
<svg width="1200" height="900" viewBox="0 0 1200 900" style="position:absolute;left:0;top:0"><g clip-path="url(#cp)"><path d="M157.0 771.7 L156.9 769.5 L157.5 767.3 L158.3 765.3 L159.7 763.7 L161.0 761.9 L161.7 759.7 L162.9 757.8 L164.9 756.5 L165.5 754.3 L166.7 752.4 L168.7 751.1 L169.3 748.9 L170.9 747.3 L172.1 745.5 L173.9 744.2 L175.1 742.3 L177.1 741.3 L179.0 740.0 L180.2 740.3 L181.6 742.0 L183.5 743.3 L183.6 741.0 L185.2 739.2 L185.8 737.1 L186.7 735.1 L187.8 733.2 L190.0 732.0 L190.9 730.0 L192.5 728.4 L194.0 726.8 L195.5 725.8 L197.7 725.6 L199.7 724.6 L202.0 724.7 L204.1 723.8 L206.1 722.9 L207.3 721.1 L207.7 718.7 L209.0 716.9 L210.3 715.1 L212.6 714.4 L214.0 712.6 L215.3 710.8 L215.9 708.7 L217.2 706.8 L218.1 704.8 L219.1 702.9 L220.4 701.1 L221.4 699.1 L223.1 698.1 L225.0 696.9 L227.1 696.2 L229.0 695.1 L231.0 694.3 L232.6 692.6 L233.6 690.5 L235.7 689.4 L236.9 688.0 L239.0 687.6 L241.2 686.9 L242.9 685.6 L243.8 683.5 L245.7 682.2 L246.9 680.3 L247.9 678.3 L249.8 677.0 L252.3 676.6 L253.6 674.9 L253.9 672.4 L255.9 671.1 L256.9 669.1 L259.1 669.4 L260.6 668.9 L262.4 667.6 L263.9 666.0 L264.6 663.7 L266.5 662.4 L267.4 660.3 L269.0 658.8 L269.4 656.6 L270.8 654.7 L271.7 652.7 L271.9 650.5 L273.2 648.6 L273.3 646.3 L274.0 644.2 L275.5 642.5 L275.9 640.2 L277.1 638.3 L278.3 636.5 L279.5 634.6 L280.2 632.4 L281.4 630.6 L283.3 629.2 L283.6 626.9 L285.1 625.2 L285.9 623.1 L286.2 620.9 L287.3 619.0 L288.6 617.1 L289.9 615.4 L291.0 613.5 L292.2 611.6 L293.4 609.8 L294.9 608.0 L295.0 605.7 L295.5 603.6 L296.4 601.5 L296.5 599.3 L297.2 597.2 L298.6 595.3 L298.7 593.0 L299.3 590.9 L299.3 588.6 L300.4 586.7 L301.3 584.6 L301.3 582.3 L302.6 580.4 L303.3 578.3 L303.3 576.0 L304.6 574.1 L305.2 572.0 L306.4 570.2 L307.0 568.0 L308.4 566.2 L309.4 564.3 L309.6 562.0 L310.5 560.0 L312.1 558.2 L313.3 556.4 L313.6 554.1 L314.9 552.3 L316.1 550.5 L316.9 548.4 L318.0 546.5 L319.1 544.5 L320.2 542.7 L321.7 541.0 L322.6 539.0 L323.9 537.2 L325.4 535.5 L325.2 533.1 L326.5 531.2 L327.3 529.1 L327.5 526.9 L328.0 524.7 L329.5 522.9 L329.6 520.6 L330.3 518.5 L331.3 516.6 L332.4 514.6 L332.4 512.3 L333.4 510.3 L334.2 508.3 L335.5 506.4 L335.9 504.2 L337.2 502.3 L337.2 500.0 L338.2 498.0 L339.3 496.1 L340.4 494.1 L340.7 491.9 L341.3 489.7 L342.0 487.7 L343.3 485.8 L343.8 483.7 L345.4 481.9 L346.3 479.9 L346.4 477.6 L347.4 475.6 L348.8 473.8 L349.5 471.7 L350.5 469.8 L350.9 467.5 L351.5 465.4 L352.5 463.4 L354.0 461.7 L354.3 459.4 L355.2 457.4 L356.2 455.4 L357.0 453.4 L358.1 451.4 L359.7 449.9 L360.0 447.5 L361.0 445.5 L363.1 444.2 L364.1 442.2 L365.3 440.4 L365.9 438.2 L367.5 436.6 L368.6 434.8 L369.5 432.7 L371.5 431.6 L373.2 430.1 L374.6 428.4 L375.7 426.5 L376.1 424.3 L376.9 422.2 L377.4 420.1 L377.9 418.0 L379.2 416.1 L379.4 413.9 L380.4 411.8 L379.8 409.5 L381.1 407.5 L381.2 405.3 L381.8 403.1 L382.1 400.9 L382.4 398.8 L382.4 396.5 L382.3 394.2 L383.9 392.5 L384.1 390.2 L385.0 388.2 L386.2 386.3 L386.8 384.2 L387.5 382.1 L388.9 380.3 L389.5 378.1 L390.1 376.0 L390.9 373.9 L392.5 372.2 L393.0 370.1 L394.3 368.2 L395.2 366.3 L396.8 364.7 L398.8 363.7 L400.3 362.1 L400.2 359.7 L401.6 357.9 L402.4 355.8 L402.9 353.6 L403.7 351.7 L403.9 349.3 L405.6 347.7 L406.9 345.9 L407.1 343.5 L408.3 341.7 L409.6 339.9 L411.4 338.5 L412.9 336.9 L414.5 335.4 L416.4 334.3 L417.8 332.4 L419.7 331.3 L421.7 330.3 L423.4 329.1 L425.0 327.6 L427.4 327.0 L429.0 325.5 L430.3 323.3 L432.6 323.5 L434.7 323.0 L436.9 322.7 L438.9 322.3 L440.6 320.9 L441.9 319.1 L443.1 317.2 L444.8 315.7 L447.0 315.2 L449.0 314.3 L450.7 313.5 L451.7 311.5 L452.6 310.5 L454.6 311.5 L455.3 310.5 L456.8 308.9 L458.3 307.3 L459.1 306.4 L460.6 308.1 L461.2 310.3 L462.4 312.1 L463.6 314.0 L464.7 315.4 L466.9 314.9 L469.1 314.6 L471.1 313.8 L473.3 313.5 L475.2 312.3 L477.1 311.0 L479.2 310.3 L481.1 309.5 L483.3 308.7 L485.5 309.0 L487.7 308.9 L489.9 308.5 L491.5 307.0 L492.6 305.0 L494.6 303.9 L496.0 302.0 L496.2 299.7 L497.2 297.7 L497.6 295.5 L499.1 293.8 L499.7 291.6 L500.7 289.7 L501.4 287.6 L502.0 285.5 L502.8 283.4 L503.2 281.2 L503.2 278.9 L504.4 277.0 L504.3 274.7 L505.1 272.6 L506.4 270.7 L506.1 268.3 L506.8 266.2 L507.4 264.1 L509.1 262.3 L509.0 260.0 L509.6 257.8 L511.3 256.1 L511.3 253.8 L512.9 252.0 L513.4 249.9 L514.4 247.9 L515.2 245.8 L515.5 243.6 L516.4 241.6 L516.2 239.2 L517.7 237.4 L518.0 235.2 L518.9 233.1 L518.9 230.8 L520.3 229.0 L521.2 227.0 L521.0 224.5 L522.0 222.6 L523.1 220.6 L524.1 218.7 L524.2 216.3 L525.0 214.2 L526.0 212.3 L527.4 210.5 L528.5 208.6 L529.1 206.5 L530.0 204.5 L530.8 202.4 L531.5 200.4 L532.4 198.3 L532.8 196.1 L533.9 194.2 L535.0 192.2 L534.9 189.9 L535.9 187.9 L535.7 185.6 L536.8 183.6 L537.3 181.4 L537.7 179.3 L537.9 177.1 L538.3 174.9 L539.2 172.9 L540.2 170.9 L540.0 168.5 L541.1 166.5 L542.9 165.0 L543.4 163.6 L544.8 165.4 L545.9 167.3 L546.5 169.4 L547.8 171.3 L548.4 173.4 L549.2 175.5 L549.2 177.7 L550.0 179.8 L550.6 181.9 L550.6 184.2 L550.9 186.4 L552.2 188.3 L552.4 190.5 L553.4 192.6 L553.5 194.8 L554.6 196.8 L555.8 198.7 L556.6 200.7 L557.7 202.7 L558.0 204.9 L559.0 206.8 L560.2 208.7 L560.9 210.8 L561.9 212.8 L562.3 215.0 L563.8 216.8 L563.6 219.2 L564.9 221.1 L565.6 223.2 L566.5 225.2 L566.8 227.4 L567.5 229.4 L568.4 231.5 L569.0 233.6 L569.2 235.8 L569.6 238.0 L570.7 240.0 L570.8 242.2 L571.1 244.4 L572.2 246.4 L573.1 248.4 L573.7 250.5 L573.9 252.8 L574.6 254.9 L574.9 257.1 L575.7 259.1 L577.1 261.0 L577.8 263.1 L578.3 265.2 L579.1 267.3 L579.1 269.6 L579.5 271.8 L580.1 273.9 L581.5 275.8 L581.4 278.1 L582.7 280.0 L583.2 282.2 L583.4 284.4 L584.8 286.3 L585.5 288.3 L585.5 290.7 L586.9 292.5 L587.6 294.6 L588.2 296.7 L588.9 298.8 L590.4 300.6 L590.8 302.7 L592.1 304.5 L593.3 306.3 L594.9 307.9 L595.9 309.9 L597.5 311.7 L599.7 311.2 L601.9 311.5 L604.2 311.1 L606.3 311.5 L608.5 312.1 L610.7 311.7 L612.6 313.1 L614.7 313.9 L617.1 313.8 L618.7 315.6 L621.0 315.8 L622.9 317.0 L625.0 317.7 L627.3 317.9 L629.2 319.0 L631.3 319.7 L633.3 318.5 L634.4 316.5 L635.9 314.9 L637.0 313.0 L637.5 310.8 L638.2 308.8 L639.6 309.0 L640.4 311.1 L641.6 312.9 L642.9 314.0 L644.5 312.4 L645.9 310.8 L647.2 312.5 L647.6 314.7 L648.8 316.6 L651.1 316.3 L653.2 317.4 L654.9 318.1 L657.0 319.1 L658.0 321.3 L660.2 321.3 L662.4 321.7 L664.6 322.3 L666.7 322.3 L668.2 323.9 L669.6 325.7 L671.2 327.1 L673.0 328.3 L674.9 329.3 L676.9 330.3 L678.5 332.0 L680.7 332.4 L682.9 331.9 L684.3 333.2 L686.0 334.6 L687.5 336.3 L688.7 338.1 L689.5 340.1 L691.4 341.7 L691.8 343.9 L693.0 345.8 L693.3 348.0 L694.7 349.8 L695.7 351.8 L696.6 353.8 L697.6 355.8 L698.4 357.8 L700.0 359.4 L700.6 361.6 L702.5 363.0 L703.4 365.1 L704.6 367.0 L705.5 369.0 L705.8 371.3 L706.8 373.2 L708.4 374.9 L709.3 376.9 L710.0 379.0 L710.5 381.2 L711.3 383.3 L712.2 385.2 L713.3 387.2 L714.6 389.0 L715.2 391.1 L715.9 393.3 L715.9 395.5 L716.3 397.7 L717.1 399.8 L717.4 401.9 L717.2 404.2 L718.5 406.2 L718.0 408.6 L718.4 410.7 L718.9 412.9 L720.1 414.8 L720.5 417.0 L721.0 419.2 L721.4 421.3 L721.6 423.5 L722.6 425.6 L724.3 427.2 L725.0 429.3 L726.6 430.9 L727.7 432.8 L728.9 434.7 L730.8 436.1 L730.9 438.5 L732.0 440.4 L733.2 442.3 L734.2 444.3 L735.2 446.2 L736.5 448.0 L737.1 450.2 L738.6 451.9 L740.0 453.1 L741.6 454.2 L742.4 456.2 L742.9 458.4 L743.1 460.6 L743.9 462.7 L745.4 464.5 L745.3 466.9 L746.8 468.6 L748.9 469.6 L749.4 472.0 L750.4 474.0 L751.3 476.0 L751.6 478.2 L752.0 480.4 L753.5 482.2 L753.6 484.5 L754.7 486.5 L756.1 488.3 L756.2 490.6 L757.3 492.5 L757.7 494.7 L758.8 496.7 L759.6 498.7 L760.9 500.6 L761.2 502.8 L761.9 504.9 L762.8 506.9 L764.1 508.8 L764.6 510.9 L765.7 512.9 L766.9 514.8 L767.8 516.8 L768.5 518.8 L769.2 520.9 L770.0 523.0 L770.5 525.2 L771.0 527.3 L772.0 529.3 L772.9 531.3 L773.6 533.4 L774.8 535.3 L775.5 537.4 L776.1 539.5 L777.4 541.4 L778.5 543.3 L778.6 545.6 L779.7 547.5 L781.3 549.1 L782.7 550.8 L783.9 552.7 L785.3 554.4 L786.6 556.2 L787.7 558.1 L788.3 560.2 L788.5 562.5 L790.1 564.2 L790.6 566.4 L791.8 568.3 L792.7 570.3 L793.7 572.2 L794.5 574.3 L795.7 576.2 L796.9 578.1 L797.7 580.2 L798.2 582.3 L798.3 584.6 L799.4 586.6 L799.9 588.7 L800.0 591.0 L800.7 593.0 L801.5 595.1 L803.3 596.5 L804.1 598.7 L805.2 600.5 L806.7 602.2 L806.8 604.7 L808.6 606.3 L809.7 608.2 L810.2 610.3 L811.6 612.1 L812.1 614.3 L813.3 616.2 L814.6 618.0 L815.6 619.9 L815.9 622.3 L817.4 624.0 L817.8 626.2 L819.2 628.0 L820.3 630.0 L821.9 631.4 L822.8 633.4 L823.6 635.4 L823.8 637.7 L824.8 639.7 L825.7 641.7 L826.7 643.7 L826.6 646.0 L827.0 648.2 L828.0 650.2 L829.9 651.5 L831.4 653.2 L832.8 654.9 L834.1 656.6 L835.7 658.2 L837.0 659.9 L837.8 662.1 L839.0 664.0 L841.0 665.2 L841.8 667.5 L843.7 668.6 L845.0 670.4 L846.5 672.1 L848.0 673.7 L850.6 673.7 L852.1 675.4 L852.8 677.5 L853.6 679.7 L855.5 681.1 L856.4 683.1 L857.7 684.8 L860.0 684.3 L862.2 685.1 L863.8 686.6 L865.0 688.5 L866.4 690.3 L868.5 691.1 L870.1 692.8 L872.0 693.8 L873.9 695.0 L875.6 696.2 L876.6 698.2 L878.6 699.4 L880.0 701.2 L881.3 702.9 L881.9 705.1 L883.4 706.8 L884.8 708.4 L886.4 709.9 L887.5 711.9 L889.1 713.4 L890.4 715.2 L892.1 716.6 L893.6 718.1 L895.9 717.9 L898.0 718.9 L900.2 718.3 L901.9 720.2 L903.4 721.8 L904.9 723.3 L906.5 724.9 L907.3 727.0 L908.1 729.1 L909.9 730.5 L911.2 732.3 L912.8 733.8 L914.7 735.0 L916.4 735.0 L917.2 733.0 L918.2 730.9 L920.0 732.0 L922.1 732.8 L923.8 734.2 L925.4 735.9 L927.8 736.2 L929.0 738.2 L930.8 739.5 L932.3 741.2 L933.1 743.4 L934.8 744.8 L936.3 746.5 L937.5 748.3 L938.2 750.5 L939.5 752.3 L941.2 753.8 L942.1 755.9 L942.5 758.2 L944.4 759.6 L944.7 760.7" fill="none" stroke="#ff0000" stroke-width="2.2" stroke-linejoin="round"/></g></svg>
<div class="abs" style="left:971.4px;top:98.5px;width:169.3px;height:17px;border:1px solid #7c7c7c;box-shadow:inset 1px 1px 0 #fff,1px 1px 0 #fff;box-sizing:border-box;background:#f0f0f0"></div>
<span class="abs ser" style="left:973.6px;top:100.9px;white-space:nowrap;transform-origin:0 0;transform:scaleX(1.053);font-size:11.4px;line-height:14px;color:#111;font-weight:500;">全区間</span>
<span class="abs ser" style="left:1014.8px;top:100.9px;white-space:nowrap;transform-origin:0 0;transform:scaleX(0.712);font-size:11.4px;line-height:14px;color:#111;font-weight:500;">(トラック</span>
<span class="abs ser" style="left:1054.6px;top:100.9px;white-space:nowrap;transform-origin:0 0;transform:scaleX(0.948);font-size:11.4px;line-height:14px;color:#111;font-weight:500;">)</span>
<div class="tbl" style="top:118px"><div></div><div></div><div></div><div></div><div></div><div></div><div></div><div></div><div></div><div></div><div></div></div><span class="abs ser" style="left:980.0px;top:118.8px;white-space:nowrap;transform-origin:0 0;transform:scaleX(0.958);font-size:12px;line-height:14px;color:#000;-webkit-text-stroke:0.3px #000;">距離</span><span class="abs ser" style="left:1080.0px;top:118.8px;white-space:nowrap;transform-origin:0 0;transform:scaleX(1.047);font-size:12px;line-height:14px;color:#000;-webkit-text-stroke:0.3px #000;">12.195km</span><span class="abs ser" style="left:980.0px;top:131.8px;white-space:nowrap;transform-origin:0 0;transform:scaleX(0.979);font-size:12px;line-height:14px;color:#000;-webkit-text-stroke:0.3px #000;">沿面距離</span><span class="abs ser" style="left:1080.0px;top:131.8px;white-space:nowrap;transform-origin:0 0;transform:scaleX(1.047);font-size:12px;line-height:14px;color:#000;-webkit-text-stroke:0.3px #000;">12.392km</span><span class="abs ser" style="left:980.0px;top:144.7px;white-space:nowrap;transform-origin:0 0;transform:scaleX(0.972);font-size:12px;line-height:14px;color:#000;-webkit-text-stroke:0.3px #000;">標高差</span><span class="abs ser" style="left:1086.5px;top:144.7px;white-space:nowrap;transform-origin:0 0;transform:scaleX(1.058);font-size:12px;line-height:14px;color:#000;-webkit-text-stroke:0.3px #000;">15.862m</span><span class="abs ser" style="left:980.0px;top:157.6px;white-space:nowrap;transform-origin:0 0;transform:scaleX(0.958);font-size:12px;line-height:14px;color:#000;-webkit-text-stroke:0.3px #000;">方位</span><span class="abs ser" style="left:1082.0px;top:157.6px;white-space:nowrap;transform-origin:0 0;transform:scaleX(1.164);font-size:12px;line-height:14px;color:#000;-webkit-text-stroke:0.3px #000;">298.23°</span><span class="abs ser" style="left:980.0px;top:170.6px;white-space:nowrap;transform-origin:0 0;transform:scaleX(0.944);font-size:12px;line-height:14px;color:#000;-webkit-text-stroke:0.3px #000;">俯角<span class="cj">→</span></span><span class="abs ser" style="left:1082.0px;top:170.6px;white-space:nowrap;transform-origin:0 0;transform:scaleX(1.229);font-size:12px;line-height:14px;color:#000;-webkit-text-stroke:0.3px #000;">-55.74°</span><span class="abs ser" style="left:980.0px;top:183.6px;white-space:nowrap;transform-origin:0 0;transform:scaleX(0.944);font-size:12px;line-height:14px;color:#000;-webkit-text-stroke:0.3px #000;">俯角<span class="cj">←</span></span><span class="abs ser" style="left:1089.0px;top:183.6px;white-space:nowrap;transform-origin:0 0;transform:scaleX(1.163);font-size:12px;line-height:14px;color:#000;-webkit-text-stroke:0.3px #000;">55.74°</span><span class="abs ser" style="left:980.0px;top:196.5px;white-space:nowrap;transform-origin:0 0;transform:scaleX(0.972);font-size:12px;line-height:14px;color:#000;-webkit-text-stroke:0.3px #000;">沈み量</span><span class="abs ser" style="left:1111.0px;top:196.5px;white-space:nowrap;transform-origin:0 0;transform:scaleX(1.050);font-size:12px;line-height:14px;color:#000;-webkit-text-stroke:0.3px #000;">-0m</span><span class="abs ser" style="left:980.0px;top:209.4px;white-space:nowrap;transform-origin:0 0;transform:scaleX(0.979);font-size:12px;line-height:14px;color:#000;-webkit-text-stroke:0.3px #000;">所要時間</span><span class="abs ser" style="left:1083.0px;top:209.4px;white-space:nowrap;transform-origin:0 0;transform:scaleX(1.114);font-size:12px;line-height:14px;color:#000;-webkit-text-stroke:0.3px #000;">05:32:34</span><span class="abs ser" style="left:980.0px;top:222.4px;white-space:nowrap;transform-origin:0 0;transform:scaleX(1.002);font-size:12px;line-height:14px;color:#000;-webkit-text-stroke:0.3px #000;">累積標高(+)</span><span class="abs ser" style="left:1079.0px;top:222.4px;white-space:nowrap;transform-origin:0 0;transform:scaleX(1.082);font-size:12px;line-height:14px;color:#000;-webkit-text-stroke:0.3px #000;">863.745m</span><span class="abs ser" style="left:980.0px;top:235.3px;white-space:nowrap;transform-origin:0 0;transform:scaleX(1.050);font-size:12px;line-height:14px;color:#000;-webkit-text-stroke:0.3px #000;">累積標高(-)</span><span class="abs ser" style="left:1072.0px;top:235.3px;white-space:nowrap;transform-origin:0 0;transform:scaleX(1.132);font-size:12px;line-height:14px;color:#000;-webkit-text-stroke:0.3px #000;">-847.883m</span><span class="abs ser" style="left:980.0px;top:248.3px;white-space:nowrap;transform-origin:0 0;transform:scaleX(0.979);font-size:12px;line-height:14px;color:#000;-webkit-text-stroke:0.3px #000;">平均速度</span><span class="abs ser" style="left:1087.0px;top:248.3px;white-space:nowrap;transform-origin:0 0;transform:scaleX(1.079);font-size:12px;line-height:14px;color:#000;-webkit-text-stroke:0.3px #000;">2.2km/h</span>
<div class="abs" style="left:972.4px;top:264.5px;width:168.2px;height:16px;border-right:1px solid #6e6e6e;border-bottom:1px solid #6e6e6e;border-top:1px solid #fff;box-shadow:0 1px 0 #fff;box-sizing:border-box;background:#eeeeee"></div>
<span class="abs ser" style="left:973.6px;top:265.9px;white-space:nowrap;transform-origin:0 0;transform:scaleX(1.053);font-size:11.4px;line-height:14px;color:#111;font-weight:500;">全区間</span>
<span class="abs ser" style="left:1014.8px;top:265.9px;white-space:nowrap;transform-origin:0 0;transform:scaleX(0.971);font-size:11.4px;line-height:14px;color:#111;font-weight:500;">(地形</span>
<span class="abs ser" style="left:1042.9px;top:265.9px;white-space:nowrap;transform-origin:0 0;transform:scaleX(0.948);font-size:11.4px;line-height:14px;color:#111;font-weight:500;">)</span>
<div class="tbl" style="top:283.4px"><div></div><div></div><div></div><div></div><div></div><div></div><div></div><div></div><div></div><div></div><div></div></div><span class="abs ser" style="left:980.0px;top:284.2px;white-space:nowrap;transform-origin:0 0;transform:scaleX(0.958);font-size:12px;line-height:14px;color:#000;-webkit-text-stroke:0.3px #000;">距離</span><span class="abs ser" style="left:1080.0px;top:284.2px;white-space:nowrap;transform-origin:0 0;transform:scaleX(1.047);font-size:12px;line-height:14px;color:#000;-webkit-text-stroke:0.3px #000;">12.195km</span><span class="abs ser" style="left:980.0px;top:297.1px;white-space:nowrap;transform-origin:0 0;transform:scaleX(0.979);font-size:12px;line-height:14px;color:#000;-webkit-text-stroke:0.3px #000;">沿面距離</span><span class="abs ser" style="left:1080.0px;top:297.1px;white-space:nowrap;transform-origin:0 0;transform:scaleX(1.047);font-size:12px;line-height:14px;color:#000;-webkit-text-stroke:0.3px #000;">12.397km</span><span class="abs ser" style="left:980.0px;top:310.1px;white-space:nowrap;transform-origin:0 0;transform:scaleX(0.972);font-size:12px;line-height:14px;color:#000;-webkit-text-stroke:0.3px #000;">標高差</span><span class="abs ser" style="left:1086.5px;top:310.1px;white-space:nowrap;transform-origin:0 0;transform:scaleX(1.058);font-size:12px;line-height:14px;color:#000;-webkit-text-stroke:0.3px #000;">15.862m</span><span class="abs ser" style="left:980.0px;top:323.0px;white-space:nowrap;transform-origin:0 0;transform:scaleX(0.958);font-size:12px;line-height:14px;color:#000;-webkit-text-stroke:0.3px #000;">方位</span><span class="abs ser" style="left:1082.0px;top:323.0px;white-space:nowrap;transform-origin:0 0;transform:scaleX(1.164);font-size:12px;line-height:14px;color:#000;-webkit-text-stroke:0.3px #000;">298.23°</span><span class="abs ser" style="left:980.0px;top:336.0px;white-space:nowrap;transform-origin:0 0;transform:scaleX(0.944);font-size:12px;line-height:14px;color:#000;-webkit-text-stroke:0.3px #000;">俯角<span class="cj">→</span></span><span class="abs ser" style="left:1082.0px;top:336.0px;white-space:nowrap;transform-origin:0 0;transform:scaleX(1.229);font-size:12px;line-height:14px;color:#000;-webkit-text-stroke:0.3px #000;">-55.74°</span><span class="abs ser" style="left:980.0px;top:348.9px;white-space:nowrap;transform-origin:0 0;transform:scaleX(0.944);font-size:12px;line-height:14px;color:#000;-webkit-text-stroke:0.3px #000;">俯角<span class="cj">←</span></span><span class="abs ser" style="left:1089.0px;top:348.9px;white-space:nowrap;transform-origin:0 0;transform:scaleX(1.163);font-size:12px;line-height:14px;color:#000;-webkit-text-stroke:0.3px #000;">55.74°</span><span class="abs ser" style="left:980.0px;top:361.9px;white-space:nowrap;transform-origin:0 0;transform:scaleX(0.972);font-size:12px;line-height:14px;color:#000;-webkit-text-stroke:0.3px #000;">沈み量</span><span class="abs ser" style="left:1111.0px;top:361.9px;white-space:nowrap;transform-origin:0 0;transform:scaleX(1.050);font-size:12px;line-height:14px;color:#000;-webkit-text-stroke:0.3px #000;">-0m</span><span class="abs ser" style="left:980.0px;top:374.8px;white-space:nowrap;transform-origin:0 0;transform:scaleX(0.979);font-size:12px;line-height:14px;color:#000;-webkit-text-stroke:0.3px #000;">推定時間</span><span class="abs ser" style="left:1083.0px;top:374.8px;white-space:nowrap;transform-origin:0 0;transform:scaleX(1.114);font-size:12px;line-height:14px;color:#000;-webkit-text-stroke:0.3px #000;">03:59:23</span><span class="abs ser" style="left:980.0px;top:387.8px;white-space:nowrap;transform-origin:0 0;transform:scaleX(1.002);font-size:12px;line-height:14px;color:#000;-webkit-text-stroke:0.3px #000;">累積標高(+)</span><span class="abs ser" style="left:1079.0px;top:387.8px;white-space:nowrap;transform-origin:0 0;transform:scaleX(1.082);font-size:12px;line-height:14px;color:#000;-webkit-text-stroke:0.3px #000;">877.990m</span><span class="abs ser" style="left:980.0px;top:400.8px;white-space:nowrap;transform-origin:0 0;transform:scaleX(1.050);font-size:12px;line-height:14px;color:#000;-webkit-text-stroke:0.3px #000;">累積標高(-)</span><span class="abs ser" style="left:1072.0px;top:400.8px;white-space:nowrap;transform-origin:0 0;transform:scaleX(1.132);font-size:12px;line-height:14px;color:#000;-webkit-text-stroke:0.3px #000;">-876.172m</span><span class="abs ser" style="left:980.0px;top:413.7px;white-space:nowrap;transform-origin:0 0;transform:scaleX(0.916);font-size:12px;line-height:14px;color:#000;-webkit-text-stroke:0.3px #000;">見通し</span><span class="abs ser" style="left:1089.0px;top:413.7px;white-space:nowrap;transform-origin:0 0;transform:scaleX(0.896);font-size:12px;line-height:14px;color:#000;-webkit-text-stroke:0.3px #000;">見えます</span>
</body></html>
